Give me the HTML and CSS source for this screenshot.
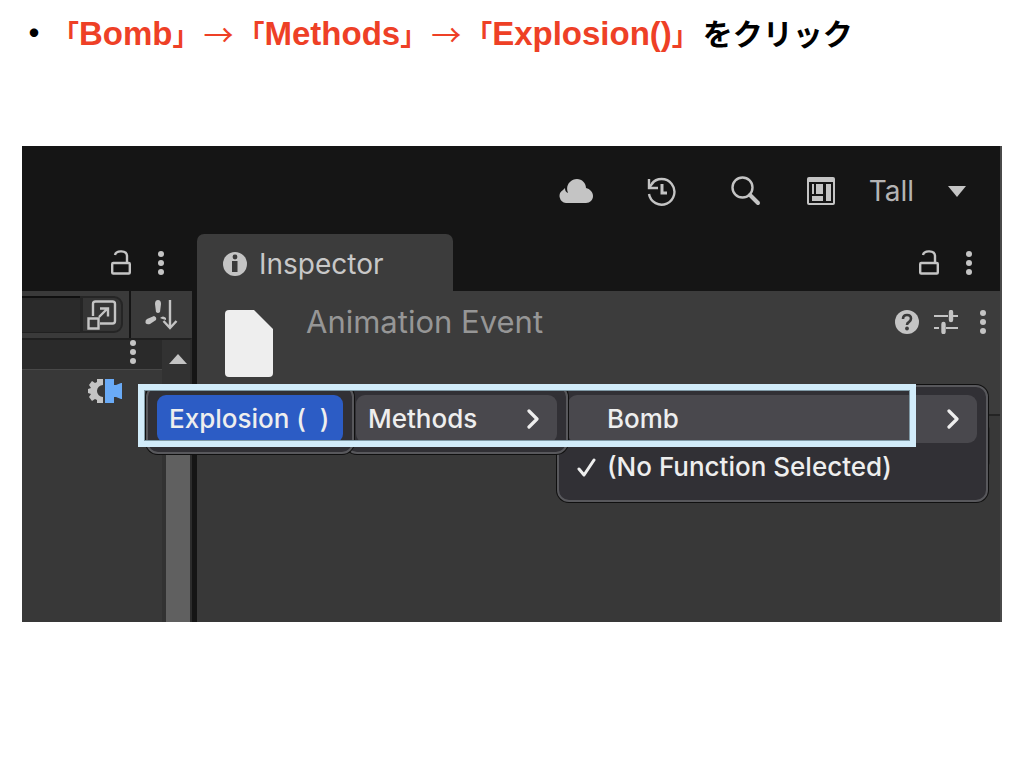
FILE: index.html
```html
<!DOCTYPE html>
<html lang="ja">
<head>
<meta charset="utf-8">
<title>Animation Event</title>
<link rel="stylesheet" href="styles.css">
</head>
<body>
<main class="slide">
  <h1 class="heading"><span class="bullet">・</span><span class="accent"><span class="bracket open">「</span>Bomb<span class="bracket">」</span><span class="arrow">→</span><span class="bracket open">「</span>Methods<span class="bracket">」</span><span class="arrow">→</span><span class="bracket open">「</span>Explosion()<span class="bracket">」</span></span><span class="kana">をクリック</span></h1>

  <section class="editor">
    <header class="toolbar">
      <button class="icon" aria-label="Cloud"><svg width="34" height="26" viewBox="0 0 34 26"><path d="M7 25a7 7 0 0 1-3-13l2-2c0 3 1 4 3 5-3-7 2-14 9-14 5 0 9 4 9 9 4 1 7 4 7 8s-3 7-7 7z" fill="#c4c4c4"/></svg></button>
      <button class="icon" aria-label="History"><svg width="30" height="30" viewBox="0 0 30 30" fill="none" stroke="#c4c4c4" stroke-width="2.4"><path d="M4.500 8A12.800 12.800 0 1 1 2 18M2 3v9h9M2.500 11l5-6"/><path d="M15 8v9h5" stroke-width="3"/></svg></button>
      <button class="icon" aria-label="Search"><svg width="30" height="30" viewBox="0 0 30 30" fill="none" stroke="#c4c4c4"><circle cx="11.500" cy="11.500" r="10" stroke-width="2.400"/><path d="M19 19l8 8" stroke-width="4" stroke-linecap="round"/></svg></button>
      <button class="layout"><svg width="28" height="28" viewBox="0 0 28 28"><rect width="28" height="28" rx="2" fill="#c4c4c4"/><path d="M2 5h24v21H2z" fill="#151515"/><path d="M5 7h2v10H5zM9 7h7v10H9zM19 7h5v17h-5zM5 19h11v5H5z" fill="#c4c4c4"/></svg><span class="layout-name">Tall</span><svg width="18" height="11" viewBox="0 0 18 11"><path d="M0 0h18l-9 11z" fill="#c4c4c4"/></svg></button>
    </header>

    <div class="panels">
      <section class="side">
        <div class="tabs">
          <button class="icon" aria-label="Lock"><svg width="20" height="25" viewBox="0 0 20 25" fill="none" stroke="#c4c4c4" stroke-width="2.400"><rect x="1.200" y="13" width="17.600" height="10.500" rx="1"/><path d="M4 5c1-5 12-5 12 1v7"/></svg></button>
          <button class="icon" aria-label="More"><svg width="6" height="24" viewBox="0 0 6 24" fill="#c4c4c4"><circle cx="3" cy="3" r="3"/><circle cx="3" cy="12" r="3"/><circle cx="3" cy="21" r="3"/></svg></button>
        </div>
        <div class="tools">
          <div class="search">
            <input class="search-box" type="text" aria-label="Filter">
            <button class="expand" aria-label="Expand"><svg width="30" height="30" viewBox="0 0 30 30" fill="none" stroke="#c4c4c4" stroke-width="2.400"><path d="M6 16V4q0-2.500 2.500-2.500h17q2.500 0 2.500 2.500v17q0 2.500-2.500 2.500H13M1.500 18.500h10v10h-10zM12 17l9-9M13 8.500h8v8"/></svg></button>
          </div>
          <button class="sort" aria-label="Sort"><svg width="33" height="30" viewBox="0 0 33 30"><path d="M10 4q0-4 3-4t3 4l-1 8q-2 2-4 0zM11 20l-6 4q-3 1-4.500-1-.500-3 1.500-4l7-3q3 1 2 4zM15 18q3-3 6 0v2q-4-1-6-2z" fill="#c4c4c4"/><path d="M25 0v27M18.500 21l6.500 7 6.500-7" fill="none" stroke="#c4c4c4" stroke-width="2.400"/></svg></button>
        </div>
        <div class="list">
          <div class="rows">
            <div class="row-head"><button class="icon" aria-label="Row menu"><svg width="6" height="24" viewBox="0 0 6 24" fill="#c4c4c4"><circle cx="3" cy="3" r="3"/><circle cx="3" cy="12" r="3"/><circle cx="3" cy="21" r="3"/></svg></button></div>
            <div class="row"><svg width="34" height="24" viewBox="0 0 34 24"><path d="M15 0H9v3L7 4 4 2 1 6l2 3-3 1v4l3 1-2 3 3 4 3-2 2 1v3h6v-6a6 6 0 0 1 0-12z" fill="#c4c4c4"/><path d="M17 0h9v6h2l5-2h1v16h-1l-5-2h-2v6h-9z" fill="#6aabf7"/></svg></div>
          </div>
          <div class="scroll"><button class="scroll-up" aria-label="Scroll up"><svg width="18" height="10" viewBox="0 0 18 10"><path d="M0 10h18L9 0z" fill="#c4c4c4"/></svg></button><div class="thumb"></div></div>
        </div>
      </section>

      <section class="inspector">
        <div class="inspector-tabs">
          <div class="tab"><svg width="24" height="24" viewBox="0 0 24 24"><circle cx="12" cy="12" r="12" fill="#c4c4c4"/><circle cx="12" cy="5" r="2.400" fill="#3a3a3a"/><path d="M9 9h5.500v11H9z" fill="#3a3a3a"/></svg><span>Inspector</span></div>
          <div class="tab-actions">
            <button class="icon" aria-label="Lock inspector"><svg width="20" height="25" viewBox="0 0 20 25" fill="none" stroke="#c4c4c4" stroke-width="2.400"><rect x="1.200" y="13" width="17.600" height="10.500" rx="1"/><path d="M4 5c1-5 12-5 12 1v7"/></svg></button>
            <button class="icon" aria-label="Inspector menu"><svg width="6" height="24" viewBox="0 0 6 24" fill="#c4c4c4"><circle cx="3" cy="3" r="3"/><circle cx="3" cy="12" r="3"/><circle cx="3" cy="21" r="3"/></svg></button>
          </div>
        </div>
        <div class="inspector-body">
          <div class="object">
            <svg class="file" width="48" height="67" viewBox="0 0 48 67"><path d="M4 0h25l19 19v44q0 4-4 4H4q-4 0-4-4V4q0-4 4-4z" fill="#eeeeee"/></svg>
            <h2 class="object-name">Animation Event</h2>
            <div class="object-actions">
              <button class="icon" aria-label="Help"><svg width="24" height="24" viewBox="0 0 24 24"><circle cx="12" cy="12" r="12" fill="#c4c4c4"/><path d="M8 9q0-4 4-4t4 3.500q0 2-2 3.500-2 1-2 3" fill="none" stroke="#3a3a3a" stroke-width="2.600"/><circle cx="12" cy="18.500" r="1.900" fill="#3a3a3a"/></svg></button>
              <button class="icon" aria-label="Presets"><svg width="24" height="24" viewBox="0 0 24 24" fill="none" stroke="#c4c4c4"><path d="M0 6h14M19 6h5M0 18h5M12 18h12" stroke-width="2.200"/><path d="M17 2v8M9.500 14v8" stroke-width="4.400" stroke-linecap="round"/></svg></button>
              <button class="icon" aria-label="Component menu"><svg width="6" height="24" viewBox="0 0 6 24" fill="#c4c4c4"><circle cx="3" cy="3" r="3"/><circle cx="3" cy="12" r="3"/><circle cx="3" cy="21" r="3"/></svg></button>
            </div>
          </div>
          <div class="fields"><div class="field"></div></div>
        </div>
      </section>
    </div>

    <div class="menu menu-root">
      <button class="item current"><span>Bomb</span><svg class="chevron" width="12" height="20" viewBox="0 0 12 20"><path d="M2 2l8 8-8 8" fill="none" stroke="#eeeeee" stroke-width="3.200" stroke-linecap="round" stroke-linejoin="round"/></svg></button>
      <button class="item checked"><svg width="19" height="19" viewBox="0 0 19 19"><path d="M2 11l5 6L17 2" fill="none" stroke="#eeeeee" stroke-width="3" stroke-linecap="round" stroke-linejoin="round"/></svg><span>(No Function Selected)</span></button>
    </div>
    <div class="menu menu-methods">
      <button class="item current"><span>Methods</span><svg class="chevron" width="12" height="20" viewBox="0 0 12 20"><path d="M2 2l8 8-8 8" fill="none" stroke="#eeeeee" stroke-width="3.200" stroke-linecap="round" stroke-linejoin="round"/></svg></button>
    </div>
    <div class="menu menu-actions">
      <button class="item selected"><span>Explosion (&nbsp; )</span></button>
    </div>
    <div class="callout"></div>
  </section>
</main>
</body>
</html>
```

FILE: styles.css
```css
* { box-sizing: border-box; }
body {
  margin: 0;
  background: #ffffff;
  font-family: Inter, "Noto Sans CJK JP", sans-serif;
}
button {
  margin: 0;
  padding: 0;
  border: 0;
  background: none;
  color: inherit;
  font: inherit;
}
svg { display: block; flex: none; }
.slide { padding: 10px 22px; }

.heading {
  display: flex;
  margin: 0 0 88px;
  height: 48px;
  font: bold 33px/48px "Liberation Sans", "Noto Sans CJK JP", sans-serif;
  white-space: nowrap;
  color: #000000;
}
.bullet { width: 24px; display: flex; justify-content: center; }
.accent { display: flex; padding-left: 5px; color: #ee4026; }
.bracket {
  width: 28px;
  font-family: "Noto Sans CJK JP", sans-serif;
  font-size: 27px;
}
.open { display: flex; justify-content: flex-end; }
.arrow {
  width: 36px;
  text-align: center;
  font-family: "Noto Sans CJK JP", sans-serif;
  font-weight: 400;
  font-size: 30px;
  line-height: 46px;
}
.kana {
  padding-left: 3px;
  font-family: "Noto Sans CJK JP", sans-serif;
  font-size: 30px;
  line-height: 44px;
}

.editor {
  position: relative;
  background: #151515;
  border-right: 2px solid #4a4a4a;
}
.toolbar {
  display: flex;
  align-items: center;
  justify-content: flex-end;
  gap: 54px;
  height: 88px;
  padding: 2px 34px 0 0;
}
.layout { display: flex; align-items: center; gap: 34px; margin-left: -8px; }
.layout-name { font-size: 28px; line-height: 34px; color: #b4b4b4; }

.panels { display: flex; gap: 5px; min-height: 388px; }
.side { width: 170px; display: flex; flex-direction: column; }
.tabs {
  display: flex;
  align-items: center;
  justify-content: flex-end;
  gap: 27px;
  height: 57px;
  padding-right: 28px;
}
.tools { display: flex; gap: 2px; height: 47px; }
.search {
  display: flex;
  width: 107px;
  padding: 5px 6px 5px 0;
  background: #3a3a3a;
}
.search-box {
  width: 58px;
  border: 0;
  border-top: 2px solid #101010;
  border-bottom: 1px solid #202020;
  background: #2a2a2a;
}
.expand {
  flex: 1;
  display: flex;
  align-items: center;
  justify-content: center;
  border: 2px solid #252525;
  border-left-width: 3px;
  border-radius: 0 9px 9px 0;
  background: #353535;
}
.sort {
  flex: 1;
  display: flex;
  align-items: center;
  justify-content: center;
  background: #3a3a3a;
}
.list { flex: 1; display: flex; }
.rows { width: 140px; background: #383838; }
.row-head {
  display: flex;
  align-items: flex-start;
  justify-content: flex-end;
  height: 32px;
  padding-right: 26px;
  background: #2a2a2a;
  border-top: 2px solid #202020;
  border-bottom: 1px solid #484848;
}
.row { display: flex; justify-content: flex-end; padding: 9px 40px 0 0; }
.scroll {
  flex: 1;
  display: flex;
  flex-direction: column;
  border-top: 2px solid #202020;
  border-right: 2px solid #2c2c2c;
  background: #323232;
}
.scroll-up { display: flex; justify-content: center; padding: 14px 0 20px 4px; }
.thumb { flex: 1; margin-left: 4px; background: #606060; }

.inspector { flex: 1; display: flex; flex-direction: column; }
.inspector-tabs { display: flex; justify-content: space-between; height: 57px; }
.tab {
  display: flex;
  align-items: center;
  gap: 12px;
  width: 256px;
  padding: 2px 0 0 26px;
  border-radius: 7px 7px 0 0;
  background: #3c3c3c;
  font-size: 28px;
  line-height: 34px;
  color: #c8c8c8;
}
.tab-actions { display: flex; align-items: center; gap: 27px; padding-right: 28px; }
.inspector-body { flex: 1; background: #383838; }
.object {
  display: flex;
  align-items: flex-start;
  height: 125px;
  padding: 14px 14px 0 28px;
  border-bottom: 2px solid #242424;
  background: #3c3c3c;
}
.file { margin-top: 5px; }
.object-name {
  flex: 1;
  margin: 0 0 0 33px;
  font-weight: 400;
  font-size: 31px;
  line-height: 34px;
  color: #969696;
}
.object-actions { display: flex; gap: 15px; padding-top: 5px; }
.object-actions .icon:last-child { margin-left: 7px; }
.fields { display: flex; justify-content: flex-end; padding: 10px 10px 0; }
.field { width: 400px; height: 40px; border: 2px solid #2a2a2a; border-radius: 4px; }

.menu {
  position: absolute;
  padding: 8px 9px;
  border: 2px solid #58585c;
  border-radius: 12px;
  background: #313035;
  box-shadow: 0 0 0 1px #101010;
  font-weight: 500;
  font-size: 26px;
  line-height: 32px;
  color: #eeeeee;
}
.item {
  display: flex;
  align-items: center;
  justify-content: space-between;
  width: 100%;
  height: 48px;
  padding: 0 18px 0 12px;
  border-radius: 9px;
  white-space: nowrap;
}
.current { background: #49484d; }
.selected { background: #2c5cc5; }
.menu-root { left: 535px; top: 239px; width: 431px; height: 117px; }
.menu-root .current { padding-left: 39px; }
.menu-root .checked { justify-content: flex-start; gap: 11px; padding-left: 9px; }
.menu-methods { left: 323px; top: 239px; width: 223px; height: 69px; }
.menu-actions { left: 124px; top: 239px; width: 208px; height: 69px; }
.callout {
  position: absolute;
  left: 116px;
  top: 238px;
  width: 778px;
  height: 63px;
  border: 6px solid #d2ecfa;
  box-shadow: inset 0 0 0 1px #809aa6;
}
```
